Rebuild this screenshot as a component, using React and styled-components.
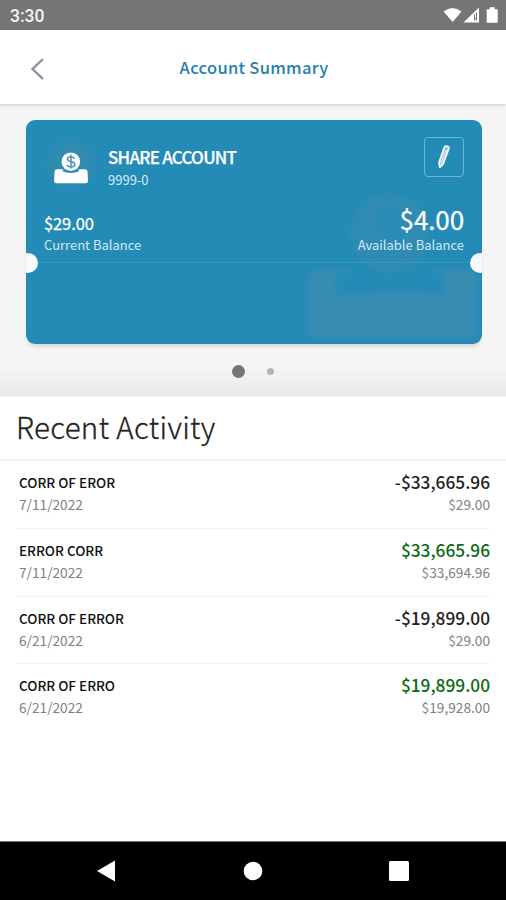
import React, { useState } from 'react';
import styled, { createGlobalStyle } from 'styled-components';

const GlobalStyle = createGlobalStyle`
  * {
    box-sizing: border-box;
  }
  body {
    margin: 0;
    background: #fff;
    font-family: 'Noto Sans CJK SC', 'Noto Sans', sans-serif;
  }
`;

const Screen = styled.div`
  display: flex;
  flex-direction: column;
  width: 506px;
  height: 900px;
  overflow: hidden;
  background: #fff;
`;

const StatusBar = styled.div`
  display: flex;
  justify-content: space-between;
  align-items: center;
  height: 30px;
  padding: 2px 7px 0 10px;
  background: #757575;
  color: #f3f3f3;
`;

const Clock = styled.span`
  font: 500 17.5px/26px Roboto, sans-serif;
`;

const Header = styled.header`
  display: grid;
  grid-template-columns: 76px 1fr 76px;
  align-items: center;
  height: 74px;
  flex: none;
  z-index: 1;
  background: #fff;
  box-shadow: 0 1px 3px rgba(0, 0, 0, 0.18);
`;

const BackButton = styled.button`
  display: flex;
  padding: 3px 0 0 30px;
  border: none;
  background: none;
`;

const HeaderTitle = styled.h1`
  margin: 0;
  padding-left: 2px;
  text-align: center;
  font-size: 16.5px;
  font-weight: 500;
  line-height: 24px;
  letter-spacing: 0.3px;
  color: #2480ab;
`;

const Carousel = styled.section`
  height: 293px;
  flex: none;
  padding: 16px 24px 0 26px;
  background: linear-gradient(#f5f5f5 0, #f5f5f5 263px, #e9e9e9 291px, #f4f4f4 293px);
`;

const Card = styled.article`
  position: relative;
  height: 224px;
  border-radius: 9px;
  overflow: hidden;
  background: #248bb7;
  color: #fff;
`;

const CardShadow = styled.div`
  border-radius: 9px;
  box-shadow: 0 4px 4px -2px rgba(80, 60, 40, 0.2);
`;

const CardTop = styled.div`
  position: relative;
  display: flex;
  height: 143px;
  flex-direction: column;
  padding: 17px 18px 0;
  border-bottom: 1px solid #3796be;
`;

const CardHead = styled.div`
  display: flex;
  height: 65px;
`;

const AccountIcon = styled.div`
  display: flex;
  justify-content: center;
  width: 54px;
  height: 54px;
  margin-right: 10px;
  border-radius: 50%;
  background: radial-gradient(circle, #318aaf 50%, rgba(49, 138, 175, 0) 72%);
`;

const AccountInfo = styled.div`
  flex: 1;
  padding-top: 7px;
`;

const AccountName = styled.div`
  font-size: 17px;
  font-weight: 500;
  line-height: 25px;
  letter-spacing: -0.75px;
  -webkit-text-stroke: 0.25px #fff;
`;

const AccountNumber = styled.div`
  font-size: 13px;
  line-height: 21px;
  color: #d3e8f1;
`;

const EditButton = styled.button`
  display: flex;
  align-items: center;
  justify-content: center;
  width: 40px;
  height: 40px;
  padding: 0;
  border: 1px solid #72b3cf;
  border-radius: 4px;
  background: none;
`;

const Balances = styled.div`
  display: flex;
  justify-content: space-between;
`;

const Balance = styled.div`
  text-align: ${(props) => (props.$right ? 'right' : 'left')};
`;

const BalanceAmount = styled.div`
  font-size: ${(props) => (props.$large ? '26px' : '16.5px')};
  line-height: 34px;
  padding-top: ${(props) => (props.$large ? '0' : '4px')};
  height: 34px;
  letter-spacing: -0.1px;
  -webkit-text-stroke: 0.25px #fff;
`;

const BalanceLabel = styled.div`
  font-size: 13px;
  line-height: 18px;
  color: #d3e8f1;
`;

const Notch = styled.span`
  position: absolute;
  top: 133px;
  ${(props) => props.$side}: -8px;
  width: 20px;
  height: 20px;
  border-radius: 50%;
  background: #f8f9fa;
`;

const Watermark = styled.svg`
  position: absolute;
  left: 278px;
  top: 62px;
  filter: blur(2px);
`;

const Dots = styled.div`
  display: flex;
  align-items: center;
  justify-content: center;
  gap: 22px;
  height: 55px;
  padding-right: 3px;
`;

const Dot = styled.span`
  width: ${(props) => (props.$active ? '13px' : '7px')};
  height: ${(props) => (props.$active ? '13px' : '7px')};
  border-radius: 50%;
  background: ${(props) => (props.$active ? '#757575' : '#b4b4b4')};
`;

const Activity = styled.section`
  flex: 1;
`;

const SectionTitle = styled.h2`
  height: 64px;
  margin: 0;
  padding: 7px 16px 0;
  border-bottom: 2px solid #f5f5f5;
  font-size: 29.5px;
  font-weight: 300;
  line-height: 44px;
  letter-spacing: 0.35px;
  color: #222;
  -webkit-text-stroke: 0.3px #222;
`;

const TransactionList = styled.ul`
  list-style: none;
  margin: 0;
  padding: 0 16px;
`;

const Transaction = styled.li`
  display: flex;
  justify-content: space-between;
  height: 67.8px;
  padding: 10px 0 0 3px;
  border-bottom: 1px solid #f4f4f4;
  &:last-child {
    border-bottom: none;
  }
`;

const Side = styled.div`
  text-align: ${(props) => (props.$right ? 'right' : 'left')};
`;

const Name = styled.div`
  font-size: 13.5px;
  font-weight: 500;
  line-height: 22px;
  color: #111;
`;

const Amount = styled.div`
  font-size: 17.3px;
  font-weight: 500;
  line-height: 22px;
  color: ${(props) => (props.$credit ? '#0b6b12' : '#222')};
`;

const Detail = styled.div`
  font-size: 13.7px;
  line-height: 22px;
  color: #808080;
`;

const NavBar = styled.nav`
  display: grid;
  grid-template-columns: 212px 82px 210px;
  place-items: center;
  height: 59px;
  padding-bottom: 1px;
  background: #000;
  border-top: 1px solid #777;
`;

const transactions = [
    { id: 1, name: 'CORR OF EROR', date: '7/11/2022', amount: '-$33,665.96', balance: '$29.00' },
    { id: 2, name: 'ERROR CORR', date: '7/11/2022', amount: '$33,665.96', balance: '$33,694.96', credit: true },
    { id: 3, name: 'CORR OF ERROR', date: '6/21/2022', amount: '-$19,899.00', balance: '$29.00' },
    { id: 4, name: 'CORR OF ERRO', date: '6/21/2022', amount: '$19,899.00', balance: '$19,928.00', credit: true },
];

const StatusIcons = () => (
    <svg width="56" height="20" viewBox="0 0 56 20" fill="#fff">
        <path d="M0.5 5.5Q9.5 -1.5 18.5 5.5L9.7 16Z" />
        <path fillRule="evenodd" d="M20.5 16.5L36 1.5V16.5ZM31 8.8V14.5H34V6Z" />
        <path d="M32 7.5H33V12H32ZM32 13H33V14.5H32Z" />
        <path d="M44.5 3.2h2.2V1.2h5v2h2.2q.8 0 .8.8v12q0 .8-.8.8h-9.4q-.8 0-.8-.8V4q0-.8.8-.8Z" />
    </svg>
);

const AccountSvg = () => (
    <svg width="54" height="54" viewBox="0 0 54 54">
        <path
            fill="#fff"
            d="M13 32.3h5.2q1.3 0 1.8 1.2.3.9 1.9.9h10.2q1.6 0 1.9-.9.5-1.2 1.8-1.2H41q2.2 0 2.5 2l.5 9.5q0 2.5-2.2 2.5H12.3q-2.2 0-2.2-2.5l.5-9.5q.3-2 2.4-2Z"
        />
        <circle cx="26.8" cy="24.7" r="9.3" fill="#fff" />
        <path d="M18.8 33.4q8 3.2 16 0" fill="none" stroke="#2b8bb4" strokeWidth="1.8" />
        <path
            d="M30.6 21.7q-1.2-1.9-3.8-1.9-3.4 0-3.4 2.3 0 1.8 3.5 2.5 3.9.8 3.9 2.9 0 2.4-3.8 2.4-2.8 0-4.2-1.9M27 17.8v13.6"
            fill="none"
            stroke="#4f9dbd"
            strokeWidth="1.6"
        />
    </svg>
);

const PencilSvg = () => (
    <svg width="16" height="26" viewBox="0 0 16 26">
        <path
            d="M8.4 3.4q.7-1.7 2.4-1.2l1 .4q1.6.6.9 2.3L7.2 19.8l-3.4 3.5-.7-4.9Z"
            fill="#8bc1d9"
            stroke="#fff"
            strokeWidth="1.7"
            strokeLinejoin="round"
        />
        <path d="M10.2 6L5 19.5" stroke="#fff" strokeWidth="0.9" />
    </svg>
);

const App = () => {
    const [activeCard] = useState(0);

    return (
        <>
            <GlobalStyle />
            <Screen>
                <StatusBar>
                    <Clock>3:30</Clock>
                    <StatusIcons />
                </StatusBar>
                <Header>
                    <BackButton aria-label="Back">
                        <svg width="15" height="24" viewBox="0 0 15 24">
                            <path d="M13 2L2.5 12L13 22" fill="none" stroke="#8b929e" strokeWidth="2.4" />
                        </svg>
                    </BackButton>
                    <HeaderTitle>Account Summary</HeaderTitle>
                </Header>
                <Carousel>
                    <CardShadow>
                        <Card>
                            <Watermark width="180" height="164" viewBox="0 0 180 164">
                                <circle cx="86" cy="51" r="40" fill="#308bb2" />
                                <path
                                    d="M98 38q-5-7-13-6-10 1-9 9 1 6 10 8 13 3 12 11-1 9-13 8-8 0-13-7"
                                    fill="none"
                                    stroke="#248bb7"
                                    strokeWidth="6"
                                />
                                <path
                                    d="M14 87H43Q52 89 54 97H122Q124 89 134 87H166Q173 88 173 96V148Q173 156 166 156H10Q3 156 3 148V98Q4 88 14 87Z"
                                    fill="#378cb1"
                                />
                                <path d="M32 90H140V112Q86 107 32 114Z" fill="#248bb7" />
                            </Watermark>
                            <CardTop>
                                <CardHead>
                                    <AccountIcon>
                                        <AccountSvg />
                                    </AccountIcon>
                                    <AccountInfo>
                                        <AccountName>SHARE ACCOUNT</AccountName>
                                        <AccountNumber>9999-0</AccountNumber>
                                    </AccountInfo>
                                    <EditButton aria-label="Edit account">
                                        <PencilSvg />
                                    </EditButton>
                                </CardHead>
                                <Balances>
                                    <Balance>
                                        <BalanceAmount>$29.00</BalanceAmount>
                                        <BalanceLabel>Current Balance</BalanceLabel>
                                    </Balance>
                                    <Balance $right>
                                        <BalanceAmount $large>$4.00</BalanceAmount>
                                        <BalanceLabel>Available Balance</BalanceLabel>
                                    </Balance>
                                </Balances>
                            </CardTop>
                            <Notch $side="left" />
                            <Notch $side="right" />
                        </Card>
                    </CardShadow>
                    <Dots>
                        {[0, 1].map((index) => (
                            <Dot key={index} $active={index === activeCard} />
                        ))}
                    </Dots>
                </Carousel>
                <Activity>
                    <SectionTitle>Recent Activity</SectionTitle>
                    <TransactionList>
                        {transactions.map((item) => (
                            <Transaction key={item.id}>
                                <Side>
                                    <Name>{item.name}</Name>
                                    <Detail>{item.date}</Detail>
                                </Side>
                                <Side $right>
                                    <Amount $credit={item.credit}>{item.amount}</Amount>
                                    <Detail>{item.balance}</Detail>
                                </Side>
                            </Transaction>
                        ))}
                    </TransactionList>
                </Activity>
                <NavBar>
                    <svg width="20" height="22" viewBox="0 0 20 22">
                        <path d="M19 0.5V21.5L1 11Z" fill="#fff" />
                    </svg>
                    <svg width="20" height="20" viewBox="0 0 20 20">
                        <circle cx="10" cy="10" r="9.3" fill="#fff" />
                    </svg>
                    <svg width="20" height="20" viewBox="0 0 20 20">
                        <rect width="20" height="20" rx="1.5" fill="#fff" />
                    </svg>
                </NavBar>
            </Screen>
        </>
    );
};

export default App;
